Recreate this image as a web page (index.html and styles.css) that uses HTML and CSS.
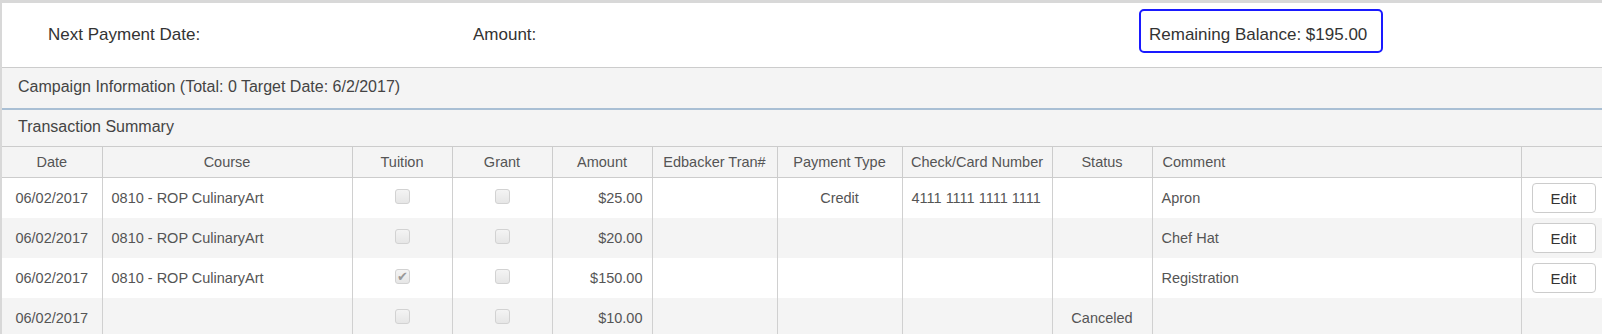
FILE: index.html
```html
<!DOCTYPE html>
<html lang="en">
<head>
  <meta charset="UTF-8">
  <meta name="viewport" content="width=device-width, initial-scale=1.0">
  <title>Transaction Summary</title>
  <link rel="stylesheet" href="styles.css">
</head>
<body>
  <div class="page">

    <!-- Payment info -->
    <div class="payment-bar">
      <div class="pay-field next-date">Next Payment Date:</div>
      <div class="pay-field amount">Amount:</div>
      <div class="balance-box">Remaining Balance: $195.00</div>
    </div>

    <!-- Campaign -->
    <div class="panel-heading campaign">Campaign Information (Total: 0 Target Date: 6/2/2017)</div>

    <!-- Transactions -->
    <div class="panel transactions">
      <div class="panel-heading">Transaction Summary</div>

      <table class="tx-table">
        <colgroup>
          <col class="col-date">
          <col class="col-course">
          <col class="col-check">
          <col class="col-check">
          <col class="col-amount">
          <col class="col-tran">
          <col class="col-type">
          <col class="col-card">
          <col class="col-status">
          <col class="col-comment">
          <col class="col-action">
        </colgroup>
        <thead>
          <tr>
            <th>Date</th>
            <th>Course</th>
            <th>Tuition</th>
            <th>Grant</th>
            <th>Amount</th>
            <th>Edbacker Tran#</th>
            <th>Payment Type</th>
            <th>Check/Card Number</th>
            <th>Status</th>
            <th class="left">Comment</th>
            <th></th>
          </tr>
        </thead>
        <tbody>
          <tr>
            <td class="center">06/02/2017</td>
            <td>0810 - ROP CulinaryArt</td>
            <td class="center"><input type="checkbox" disabled></td>
            <td class="center"><input type="checkbox" disabled></td>
            <td class="right">$25.00</td>
            <td></td>
            <td class="center">Credit</td>
            <td>4111 1111 1111 1111</td>
            <td class="center"></td>
            <td>Apron</td>
            <td class="action"><button type="button" class="edit-btn">Edit</button></td>
          </tr>
          <tr>
            <td class="center">06/02/2017</td>
            <td>0810 - ROP CulinaryArt</td>
            <td class="center"><input type="checkbox" disabled></td>
            <td class="center"><input type="checkbox" disabled></td>
            <td class="right">$20.00</td>
            <td></td>
            <td class="center"></td>
            <td></td>
            <td class="center"></td>
            <td>Chef Hat</td>
            <td class="action"><button type="button" class="edit-btn">Edit</button></td>
          </tr>
          <tr>
            <td class="center">06/02/2017</td>
            <td>0810 - ROP CulinaryArt</td>
            <td class="center"><input type="checkbox" disabled checked></td>
            <td class="center"><input type="checkbox" disabled></td>
            <td class="right">$150.00</td>
            <td></td>
            <td class="center"></td>
            <td></td>
            <td class="center"></td>
            <td>Registration</td>
            <td class="action"><button type="button" class="edit-btn">Edit</button></td>
          </tr>
          <tr>
            <td class="center">06/02/2017</td>
            <td></td>
            <td class="center"><input type="checkbox" disabled></td>
            <td class="center"><input type="checkbox" disabled></td>
            <td class="right">$10.00</td>
            <td></td>
            <td class="center"></td>
            <td></td>
            <td class="center">Canceled</td>
            <td></td>
            <td class="action"></td>
          </tr>
        </tbody>
      </table>
    </div>

  </div>
</body>
</html>
```

FILE: styles.css
```css
body {
  font-family: "Liberation Sans", Arial, sans-serif;
  margin: 0;
  padding: 0;
  background-color: #fff;
  color: #333;
}

.page {
  border-top: 3px solid #d8d8d8;
  border-left: 2px solid #d8d8d8;
}

/* Payment info bar */
.payment-bar {
  display: flex;
  align-items: flex-start;
  height: 65px;
  padding: 6px 0 0 46px;
  box-sizing: border-box;
  border-bottom: 1px solid #cccccc;
  font-size: 17px;
  line-height: 20px;
}

.pay-field {
  padding-top: 16px;
}

.next-date {
  width: 425px;
}

.amount {
  width: 666px;
}

.balance-box {
  width: 244px;
  height: 44px;
  box-sizing: border-box;
  padding: 14px 8px 6px;
  border: 2px solid #1a1aff;
  border-radius: 5px;
  white-space: nowrap;
}

/* Panel headings */
.panel-heading {
  background-color: #f4f4f4;
  font-size: 16px;
  line-height: 18px;
  color: #444;
  padding: 8px 16px 10px;
}

.campaign {
  padding-top: 10px;
  padding-bottom: 12px;
}

.transactions {
  border-top: 2px solid #a9bfd4;
}

/* Table */
.tx-table {
  width: 100%;
  border-collapse: collapse;
  table-layout: fixed;
  font-size: 14.5px;
  color: #555;
}

.col-date { width: 100px; }
.col-course { width: 250px; }
.col-check { width: 100px; }
.col-amount { width: 100px; }
.col-tran { width: 125px; }
.col-type { width: 125px; }
.col-card { width: 150px; }
.col-status { width: 100px; }
.col-comment { width: 369px; }
.col-action { width: 81px; }

.tx-table th {
  height: 30px;
  padding: 0 6px;
  font-weight: normal;
  text-align: center;
  white-space: nowrap;
  background-color: #f4f4f4;
  border-top: 1px solid #cccccc;
  border-bottom: 1px solid #cccccc;
  border-left: 1px solid #cccccc;
}

.tx-table th:first-child,
.tx-table td:first-child {
  border-left: none;
}

.tx-table th.left {
  text-align: left;
  padding-left: 10px;
}

.tx-table td {
  height: 40px;
  padding: 0 9px;
  text-align: left;
  white-space: nowrap;
  border-left: 1px solid #d0d0d0;
}

.tx-table tbody tr:nth-child(even) td {
  background-color: #f4f4f4;
}

.tx-table td.center {
  text-align: center;
}

.tx-table td.right {
  text-align: right;
}

.tx-table td.action {
  padding: 0 0 0 10px;
}

/* Disabled checkboxes */
.tx-table input[type="checkbox"] {
  appearance: none;
  -webkit-appearance: none;
  width: 15px;
  height: 15px;
  margin: 0 0 4px;
  vertical-align: middle;
  position: relative;
  border: 1px solid #d2d2d2;
  border-radius: 3px;
  background: linear-gradient(#f4f4f4, #e6e6e6);
}

.tx-table input[type="checkbox"]:checked::after {
  content: "\2714";
  position: absolute;
  left: 1px;
  top: -1px;
  font-size: 13px;
  line-height: 15px;
  color: #999;
}

.edit-btn {
  width: 64px;
  height: 30px;
  font-family: inherit;
  font-size: 15px;
  color: #333;
  background-color: #fff;
  border: 1px solid #cccccc;
  border-radius: 4px;
  cursor: pointer;
}

.edit-btn:hover {
  background-color: #e6e6e6;
}
```
